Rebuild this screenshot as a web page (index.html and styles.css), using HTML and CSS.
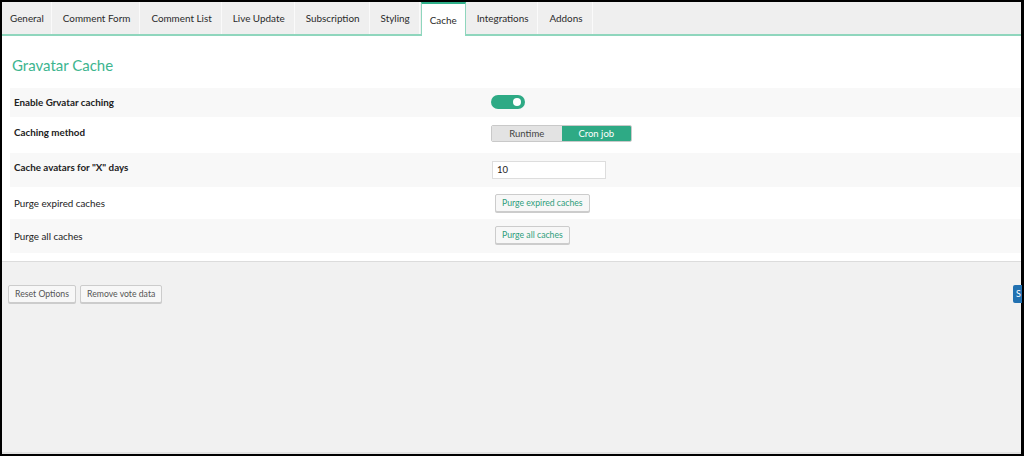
FILE: index.html
```html
<!DOCTYPE html>
<html>
<head>
<meta charset="utf-8">
<link rel="stylesheet" href="styles.css">
</head>
<body>
<div class="frame">
  <nav class="tabs">
    <div class="tab">General</div>
    <div class="tab">Comment Form</div>
    <div class="tab">Comment List</div>
    <div class="tab">Live Update</div>
    <div class="tab">Subscription</div>
    <div class="tab">Styling</div>
    <div class="tab active">Cache</div>
    <div class="tab">Integrations</div>
    <div class="tab">Addons</div>
  </nav>
  <section class="panel">
    <h2 class="title">Gravatar Cache</h2>
    <div class="rows">
      <div class="row alt r1">
        <div class="label bold">Enable Grvatar caching</div>
        <div class="control"><span class="toggle"><span class="knob"></span></span></div>
      </div>
      <div class="row r2">
        <div class="label bold">Caching method</div>
        <div class="control"><div class="seg"><span class="seg-item">Runtime</span><span class="seg-item on">Cron job</span></div></div>
      </div>
      <div class="row alt r3">
        <div class="label bold">Cache avatars for "X" days</div>
        <div class="control"><div class="input">10</div></div>
      </div>
      <div class="row r4">
        <div class="label">Purge expired caches</div>
        <div class="control"><span class="btn green">Purge expired caches</span></div>
      </div>
      <div class="row alt r5">
        <div class="label">Purge all caches</div>
        <div class="control"><span class="btn green">Purge all caches</span></div>
      </div>
    </div>
  </section>
  <div class="footer">
    <span class="btn">Reset Options</span>
    <span class="btn">Remove vote data</span>
    <span class="save">S</span>
  </div>
</div>
</body>
</html>
```
FILE: styles.css
```css
html, body {
  margin: 0;
  padding: 0;
  background: #000;
  height: 456px;
  overflow: hidden;
}
body {
  font-family: "Lato", "Open Sans", sans-serif;
  color: #333;
}
.frame {
  margin: 2px 3px 0 2px;
  height: 452px;
  background: #f1f1f1;
  display: flex;
  flex-direction: column;
  border-bottom: 2px solid #e2e2e2;
  box-sizing: border-box;
}
.tabs {
  display: flex;
  height: 32px;
  border-bottom: 2px solid #8fd6bd;
  background: #efefef;
}
.tab {
  font-size: 9.9px;
  line-height: 29px;
  padding: 2px 9px 0 11px;
  border-right: 1px solid #fafafa;
  color: #2a2a2a;
}
.tab:first-child { padding-left: 8px; padding-right: 7px; }
.tab.active {
  background: #fff;
  border-top: 2px solid #2fb08a;
  border-left: 1px solid #8fd6bd;
  border-right: 1px solid #8fd6bd;
  margin-bottom: -2px;
  padding: 0 8px 0 8px;
  line-height: 33px;
  margin-left: 1px;
}
.panel {
  background: #fff;
  padding: 0 0 8px 8px;
  border-bottom: 1px solid #dcdcdc;
}
.title {
  margin: 0;
  font-weight: 400;
  font-size: 15px;
  color: #3db58f;
  padding: 18px 0 0 2px;
  height: 52px;
  box-sizing: border-box;
  line-height: 22px;
}
.rows { display: flex; flex-direction: column; }
.row {
  display: flex;
  height: 32px;
  align-items: flex-start;
  background: #fff;
}
.row.alt { background: #f8f8f8; }
.r1 { height: 29px; }
.r2 { height: 36px; }
.r3 { height: 34px; }
.r4 { height: 32px; }
.r5 { height: 34px; }
.label {
  width: 481px;
  box-sizing: border-box;
  padding: 8px 0 0 4px;
  font-size: 9.8px;
  line-height: 12px;
  color: #222;
}
.label.bold { font-weight: 700; }
.control { padding-top: 7px; display: flex; }
.r1 .control { padding-top: 7px; }
.r1 .label { padding-top: 8px; }
.r2 .control { padding-top: 8px; }
.r2 .label { padding-top: 9px; }
.r3 .control { padding-top: 8px; }
.r3 .label { padding-top: 8px; }
.r4 .label { padding-top: 10px; }
.r5 .label { padding-top: 11px; }
.toggle {
  display: block;
  width: 34px;
  height: 14px;
  border-radius: 7px;
  background: #2eaa85;
  position: relative;
}
.knob {
  position: absolute;
  right: 4px;
  top: 3px;
  width: 8px;
  height: 8px;
  border-radius: 50%;
  background: #fff;
}
.seg {
  display: flex;
  width: 141px;
  height: 17px;
  border: 1px solid #c9c9c9;
  border-radius: 2px;
  box-sizing: border-box;
  overflow: hidden;
}
.seg-item {
  flex: 1;
  text-align: center;
  font-size: 9.5px;
  line-height: 15px;
  background: #e3e3e3;
  color: #444;
}
.seg-item.on {
  background: #2eaa85;
  color: #fff;
}
.input {
  width: 114px;
  height: 18px;
  border: 1px solid #ddd;
  box-sizing: border-box;
  font-size: 9.5px;
  line-height: 16px;
  padding-left: 4px;
  color: #222;
  margin-left: 1px;
  background: #fff;
}
.btn {
  display: inline-block;
  height: 18px;
  box-sizing: border-box;
  border: 1px solid #ccc;
  border-radius: 2px;
  background: #f7f7f7;
  font-size: 8.7px;
  line-height: 16px;
  padding: 0 6px;
  color: #555;
  box-shadow: 0 1px 0 #ccc;
}
.btn.green { color: #2f9e7c; margin-left: 4px; }
.footer {
  display: flex;
  gap: 4px;
  padding: 23px 0 0 6px;
  position: relative;
}
.save {
  position: absolute;
  right: -1px;
  top: 23px;
  width: 9px;
  height: 18px;
  background: #2271b1;
  color: #fff;
  font-size: 9px;
  line-height: 18px;
  padding-left: 3px;
  border-radius: 2px 0 0 2px;
  box-sizing: border-box;
  overflow: hidden;
}
```
